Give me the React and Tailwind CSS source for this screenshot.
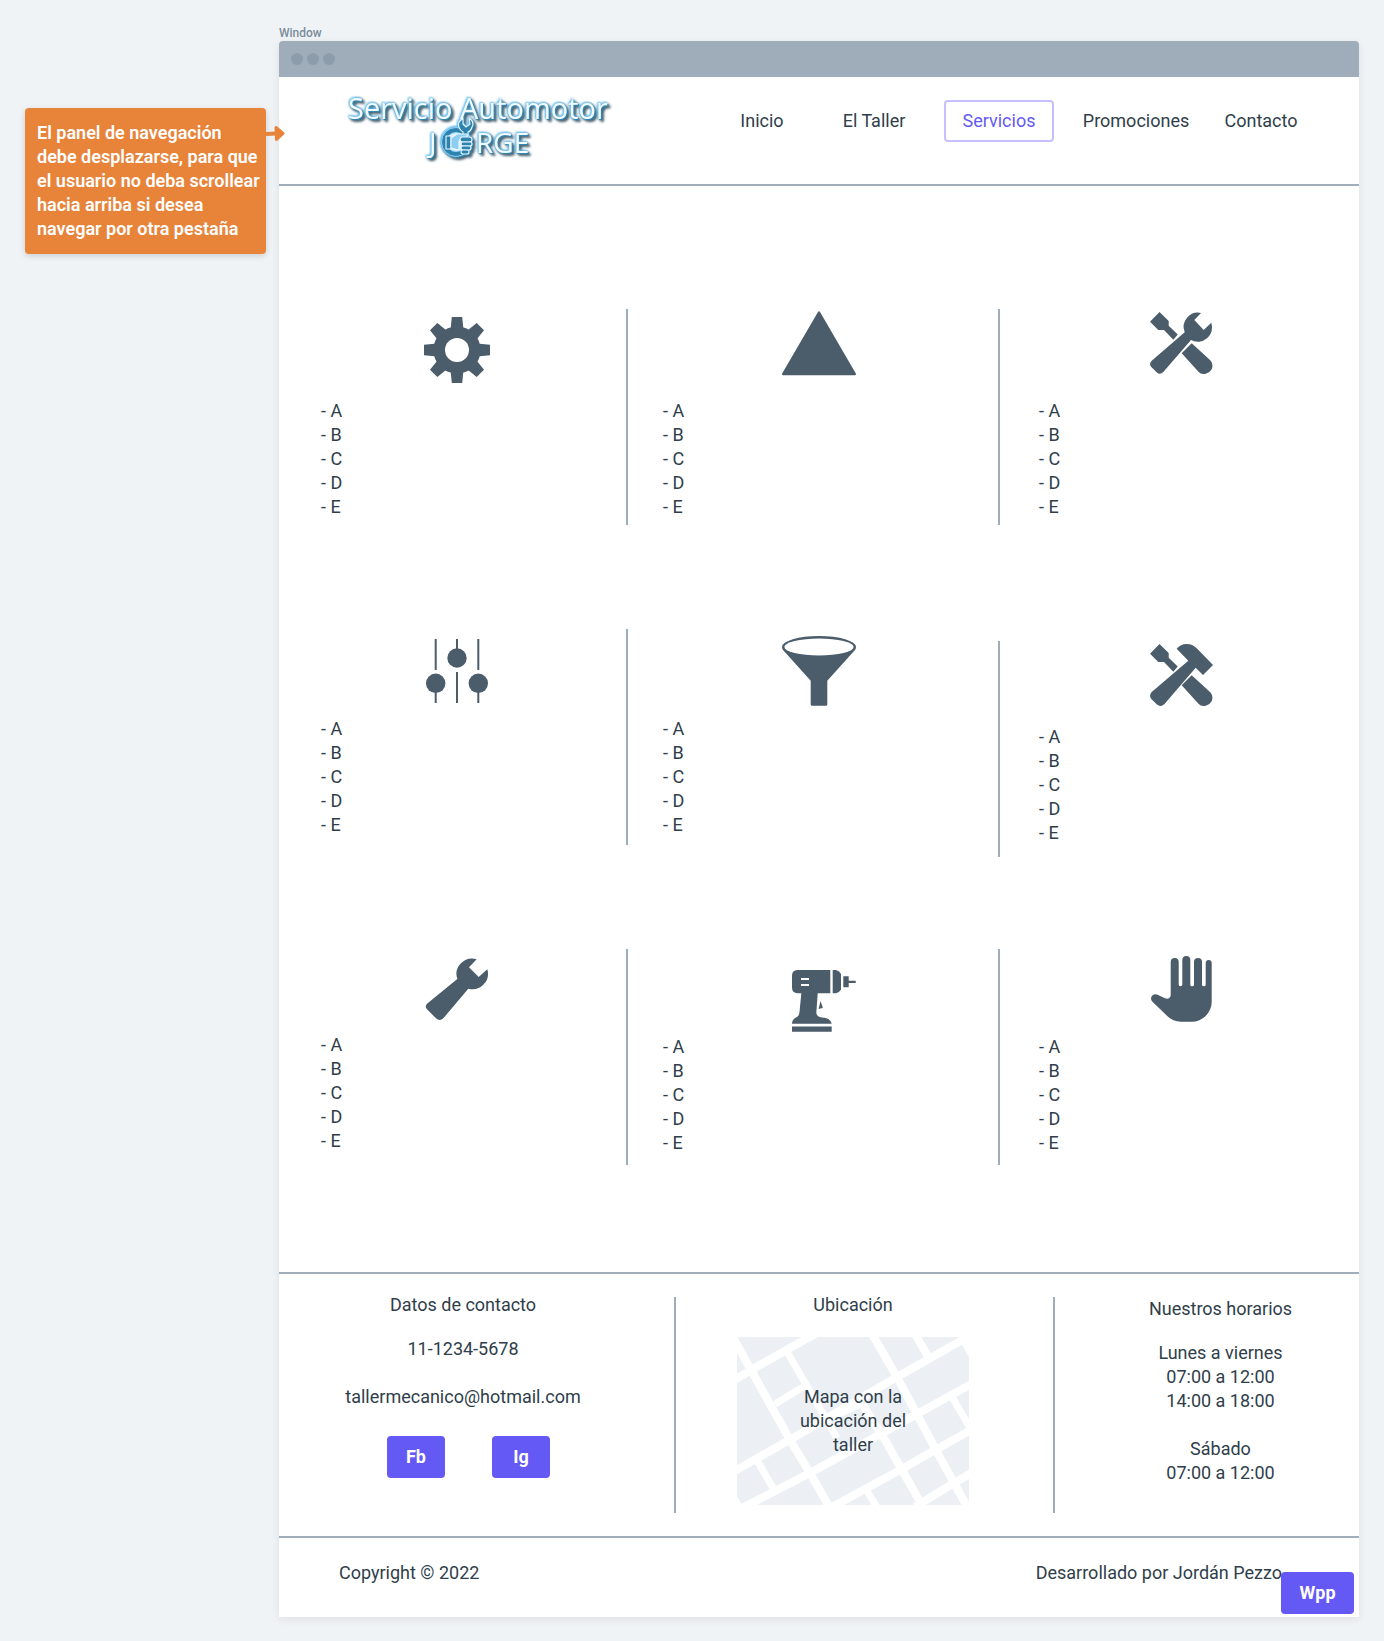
import React from "react";

const INK = "#4b5c6b";

function Icon({ label, children }) {
  return (
    <svg role="img" aria-label={label} width="80" height="84" viewBox="0 0 80 84" fill={INK}>
      {children}
    </svg>
  );
}

function GearIcon() {
  return (
    <Icon label="Engranaje">
      <circle cx="40" cy="41" r="23.6" />
      {[0, 45, 90, 135, 180, 225, 270, 315].map((a) => (
        <path key={a} d="M34.8 8H45.2L46.5 21H33.5Z" transform={`rotate(${a} 40 41)`} />
      ))}
      <circle cx="40" cy="41" r="12" fill="#fff" />
    </Icon>
  );
}

function TriangleIcon() {
  return (
    <Icon label="Baliza">
      <path d="M40 3.5L75.8 65H4.2Z" stroke={INK} strokeWidth="2.4" strokeLinejoin="round" />
    </Icon>
  );
}

function Screwdriver() {
  return (
    <>
      <path d="M18.5 3L27.7 12V16.7L36.7 25.5L32.3 30.7L23 21H17.3L9 12.7Z" />
      <path d="M50.7 34.3L69 51C75 58 69 65 62.3 65Q59.5 65 57.7 63L40.7 44.3Z" />
    </>
  );
}

function ToolsIcon() {
  return (
    <Icon label="Llave y destornillador">
      <Screwdriver />
      <path d="M60 4L53.3 11L62.7 21L70.3 13.7A14.3 14.3 0 0 1 50 31L22.3 63Q19 66.5 15.7 63.3L10.5 58.3Q7.5 55 10.7 51.7L43.7 23.3A14.3 14.3 0 0 1 60 4Z" />
    </Icon>
  );
}

function HammerIcon() {
  return (
    <Icon label="Martillo y destornillador">
      <Screwdriver />
      <path d="M35.7 7.7Q39.5 3 45.7 3Q51.5 3 55.7 7.3L72 24L62 34L54.7 26.7L23.5 63Q19.5 66.5 16 63.5L10.5 58.3Q7.5 54.5 10.7 51L47.3 19.7Z" />
    </Icon>
  );
}

function SlidersIcon() {
  return (
    <Icon label="Controles">
      <path d="M18.7 10V41M18.7 54V74M40 10V29M40 43V74M61.3 10V41M61.3 54V74" stroke={INK} strokeWidth="2" />
      <circle cx="18.7" cy="54.3" r="9.7" />
      <circle cx="40" cy="29" r="9.7" />
      <circle cx="61.3" cy="54.3" r="9.7" />
    </Icon>
  );
}

function FunnelIcon() {
  return (
    <Icon label="Embudo">
      <path d="M3 18A37 11 0 0 1 77 18Q77 20 75.5 21.5L48.3 51.7V75.5Q48.3 76.7 47 76.7H33Q31.7 76.7 31.7 75.5V51.7L4.5 21.5Q3 20 3 18Z" />
      <ellipse cx="40" cy="18" rx="34.6" ry="8.5" fill="#fff" />
    </Icon>
  );
}

function WrenchIcon() {
  return (
    <Icon label="Llave">
      <path d="M59.7 10.3L52 18.3L61.7 28L70.3 20.3A15.5 15.5 0 0 1 51.3 39.7L26.3 69.3Q22.7 72.5 19 69.3L10 60.3Q7.5 57.5 10 54.7L40.3 30A15.5 15.5 0 0 1 59.7 10.3Z" />
    </Icon>
  );
}

function DrillIcon() {
  return (
    <Icon label="Taladro">
      <path d="M18.5 21H51.3V44.3H38.7L37.3 64Q38 68 43 68.5Q51.5 69 52.7 74.7H13Q13 70.5 17 68.5Q20.3 67 20.5 63L22.3 44.3H18.5Q13 44 13 38.5V26.5Q13 21.3 18.5 21Z" />
      <path d="M53.7 21H57Q60.5 22 62 25V40.5Q60.5 43.5 57 44.3H53.7Z" />
      <path d="M64.3 27.3H69.7V31.7H76.7V34H69.7V38.3H64.3Z" />
      <path d="M13 77.5H52.7V82.7H13Z" />
      <path d="M41.5 52L43.9 58.7L39.6 60Z" />
      <path d="M22 29H30V31H22ZM22 35H30V37H22Z" fill="#fff" />
    </Icon>
  );
}

function HandIcon() {
  return (
    <Icon label="Mano">
      <path d="M29.7 13A4 4 0 0 1 37.7 13V35.5A1.8 1.8 0 0 0 41.3 35.5V11A4 4 0 0 1 49.3 11V35.5A1.8 1.8 0 0 0 53 35.5V13A4 4 0 0 1 61 13V35.5A1.8 1.8 0 0 0 64.7 35.5V14A3 3 0 0 1 70.7 14V52.7A20 20 0 0 1 50.7 72.7H40Q31.5 72.7 25.7 66.5L11 52.3Q9.3 49.5 10.7 47.3Q12.7 44.4 16 45.5L24 49.2Q28.7 50.8 29.7 46.5Z" />
    </Icon>
  );
}

function Logo() {
  return (
    <svg
      role="img"
      aria-label="Servicio Automotor Jorge"
      width="280"
      height="84"
      viewBox="0 -4 280 84"
      className="overflow-visible [filter:drop-shadow(-1px_-1px_1px_#6cc6fa)_drop-shadow(1px_1px_0px_#2d83ad)_drop-shadow(2px_2px_1px_#4a6473)]"
    >
      <g fill="#f4fbff" fontFamily="'Open Sans', 'Noto Sans', sans-serif">
        <text x="9" y="30" fontSize="29">Servicio Automotor</text>
        <text x="90" y="64" fontSize="28">J</text>
        <text x="137" y="64" fontSize="28">RGE</text>
      </g>
      <circle cx="117" cy="53" r="12" fill="none" stroke="#2d83ad" strokeWidth="5" />
      <circle cx="117" cy="53" r="14.5" fill="none" stroke="#8fd2f8" strokeWidth="1" />
      <circle cx="117" cy="53" r="9.5" fill="#d9f0fd" stroke="#8fd2f8" strokeWidth="1" />
      <g fill="#2d83ad" stroke="#eaf7ff" strokeWidth="1.1" strokeLinejoin="round">
        <path d="M124 47V43Q118 39 120 33L124 29V35L127 38L131 35L130 29Q136 33 133 38Q132 42 129 43V47Z" />
        <path d="M107 47H112V60H107Z" />
        <path d="M112 49L118 45H128V49H122L120 52V61L112 59Z" fill="#8ccdf0" />
        <rect x="121" y="48" width="12" height="5" rx="2.5" />
        <rect x="122" y="53" width="11" height="4" rx="2" />
        <rect x="122" y="57" width="10" height="4" rx="2" />
        <rect x="122" y="61" width="8" height="4" rx="2" />
      </g>
    </svg>
  );
}

function StreetMap() {
  return (
    <svg aria-hidden="true" viewBox="0 0 232 168" className="col-start-1 row-start-1 w-full">
      <rect width="232" height="168" fill="#ecf0f5" />
      <g stroke="#fff" strokeWidth="8" fill="none">
        <path d="M-6 -3L14 33L53 103L73 136L94 173" />
        <path d="M49 13L100 101" strokeWidth="7" />
        <path d="M135 -3L160 40L199 113L217 146L232 173" />
        <path d="M178 -3L192 21" />
        <path d="M225 0L238 22" />
        <path d="M215 60L235 94" strokeWidth="7" />
        <path d="M126 68L148 103L165 133L186 170" />
        <path d="M21 125L39 156" strokeWidth="7" />
        <path d="M130 154L141 172" strokeWidth="7" />
        <path d="M-4 44L14 33L53 11L80 -4" />
        <path d="M38 67L66 50" strokeWidth="7" />
        <path d="M90 82L126 66" strokeWidth="7" />
        <path d="M-4 135L56 101L160 40L236 -3" />
        <path d="M5 171L73 136L180 77L236 46" />
        <path d="M95 170L165 132L198 113L236 92" />
        <path d="M178 170L217 146L236 135" />
        <path d="M-3 160L4 172" strokeWidth="6" />
      </g>
    </svg>
  );
}

const services = [
  { icon: GearIcon, list: "mt-1.5" },
  { icon: TriangleIcon, list: "mt-1.5" },
  { icon: ToolsIcon, list: "mt-1.5" },
  { icon: SlidersIcon, list: "mt-1" },
  { icon: FunnelIcon, list: "mt-1" },
  { icon: HammerIcon, cell: "mt-3", list: "" },
  { icon: WrenchIcon, list: "" },
  { icon: DrillIcon, list: "mt-0.5" },
  { icon: HandIcon, list: "mt-0.5" },
];

const columns = [
  { cell: "", icon: "pl-[9px]", list: "pl-[42px]" },
  { cell: "border-l-2", icon: "pl-[12px]", list: "pl-[35px]" },
  { cell: "border-l-2", icon: "pl-[3px]", list: "pl-[39px]" },
];

function Service({ item, column }) {
  const Drawing = item.icon;
  return (
    <section className={`h-54 border-[#9fadba] ${column.cell} ${item.cell || ""}`}>
      <div className={`flex justify-center ${column.icon}`}>
        <Drawing />
      </div>
      <ul className={`${column.list} ${item.list}`}>
        {["A", "B", "C", "D", "E"].map((l) => (
          <li key={l}>- {l}</li>
        ))}
      </ul>
    </section>
  );
}

const button = "h-[42px] rounded bg-[#6559f5] font-bold text-white";

export default function App() {
  return (
    <div className="flex min-h-screen bg-[#eff3f6] pr-[25px] pb-6 font-['Roboto',sans-serif] text-[18px] leading-6 text-[#2f3e4a]">
      <aside className="w-[279px] shrink-0 pt-[108px] pl-[25px]">
        <div className="relative w-[241px] rounded bg-[#e8833a] py-[13px] pl-3 font-semibold whitespace-nowrap text-white shadow-[0_2px_6px_rgba(0,0,0,0.15)]">
          <p>
            El panel de navegación
            <br />
            debe desplazarse, para que
            <br />
            el usuario no deba scrollear
            <br />
            hacia arriba si desea
            <br />
            navegar por otra pestaña
          </p>
          <svg aria-hidden="true" width="20" height="18" viewBox="0 0 20 18" className="absolute top-4 left-full z-10">
            <path d="M0 10L10 9.5" stroke="#e8833a" strokeWidth="4" />
            <path d="M10 3.5L17 9.5L10.5 15.5Z" fill="#e8833a" stroke="#e8833a" strokeWidth="3" strokeLinejoin="round" />
          </svg>
        </div>
      </aside>

      <div className="flex flex-1 flex-col">
        <div className="pt-[25px] text-[12px] leading-4 font-medium text-[#7b8c9a]">Window</div>
        <div className="relative flex flex-1 flex-col rounded-t bg-white shadow-[0_2px_8px_rgba(0,0,0,0.08)]">
          <div className="flex h-9 items-center gap-1 rounded-t bg-[#9fadba] pl-3">
            <span className="size-3 rounded-full bg-[#8d9caa]" />
            <span className="size-3 rounded-full bg-[#8d9caa]" />
            <span className="size-3 rounded-full bg-[#8d9caa]" />
          </div>

          <header className="flex items-start justify-between border-b-2 border-[#9fadba] pt-2 pr-[42px] pb-[15px] pl-[60px]">
            <Logo />
            <nav className="flex items-center pt-[15px] text-center">
              <a href="#inicio" className="w-28">Inicio</a>
              <a href="#taller" className="mr-3.5 w-28">El Taller</a>
              <a
                href="#servicios"
                aria-current="page"
                className="mr-[26px] flex h-[42px] w-[110px] items-center justify-center rounded border-2 border-[#c6c0fd] text-[#6559f5]"
              >
                Servicios
              </a>
              <a href="#promociones" className="mr-[13px] w-28">Promociones</a>
              <a href="#contacto" className="w-28">Contacto</a>
            </nav>
          </header>

          <main className="grid auto-rows-[216px] grid-cols-[347fr_372fr_361fr] gap-y-[104px] pt-[123px] pb-[107px]">
            {services.map((item, i) => (
              <Service key={i} item={item} column={columns[i % 3]} />
            ))}
          </main>

          <footer>
            <div className="grid grid-cols-[395fr_2px_377fr_2px_304fr] border-y-2 border-[#9fadba] pt-[19px] pb-[23px] text-center">
              <section className="pr-[27px]">
                <h2>Datos de contacto</h2>
                <p className="mt-5">11-1234-5678</p>
                <p className="mt-6">tallermecanico@hotmail.com</p>
                <div className="mt-[27px] flex justify-center gap-[47px] pl-[11px]">
                  <button className={`${button} w-[58px]`}>Fb</button>
                  <button className={`${button} w-[58px]`}>Ig</button>
                </div>
              </section>
              <div className="mt-1 h-54 bg-[#9fadba]" />
              <section className="pr-[23px]">
                <h2>Ubicación</h2>
                <div className="mx-auto mt-5 grid w-[232px] items-center">
                  <StreetMap />
                  <p className="z-10 col-start-1 row-start-1">
                    Mapa con la
                    <br />
                    ubicación del
                    <br />
                    taller
                  </p>
                </div>
              </section>
              <div className="mt-1 h-54 bg-[#9fadba]" />
              <section className="pt-1 pl-[27px]">
                <h2>Nuestros horarios</h2>
                <p className="mt-5">
                  Lunes a viernes
                  <br />
                  07:00 a 12:00
                  <br />
                  14:00 a 18:00
                </p>
                <p className="mt-6">
                  Sábado
                  <br />
                  07:00 a 12:00
                </p>
              </section>
            </div>
            <div className="flex justify-between pt-[23px] pr-[77px] pb-8 pl-[60px]">
              <p>Copyright © 2022</p>
              <p>Desarrollado por Jordán Pezzo</p>
            </div>
          </footer>

          <button className={`${button} absolute right-[5px] bottom-[3px] w-[73px]`}>Wpp</button>
        </div>
      </div>
    </div>
  );
}
